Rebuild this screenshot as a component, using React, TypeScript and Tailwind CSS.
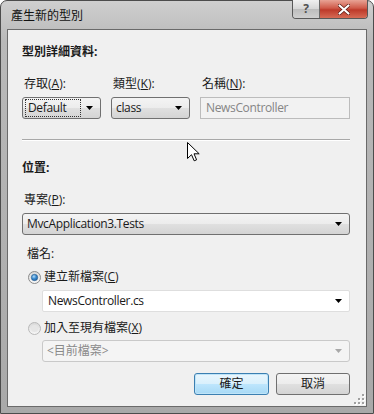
import React from "react";

const font = "font-['Open_Sans','Noto_Sans_CJK_TC',sans-serif]";
const latin = "leading-none tracking-[-0.35px]";

function Arrow({ gray }: { gray?: boolean }) {
  return (
    <svg width="7" height="4" viewBox="0 0 7 4" className="shrink-0">
      <path d="M0 0H7L3.5 4Z" fill={gray ? "#a8a8a8" : "#000"} />
    </svg>
  );
}

function Radio({ checked }: { checked?: boolean }) {
  return (
    <svg width="13" height="13" viewBox="0 0 13 13" className="shrink-0">
      <defs>
        <radialGradient id="dot" cx="40%" cy="35%" r="70%">
          <stop offset="0" stopColor="#b6dcf6" />
          <stop offset="0.5" stopColor="#3a8bd0" />
          <stop offset="1" stopColor="#1c5ea0" />
        </radialGradient>
        <linearGradient id="ring" x1="0" y1="0" x2="0" y2="1">
          <stop offset="0" stopColor="#d8d8d8" />
          <stop offset="1" stopColor="#f8f8f8" />
        </linearGradient>
      </defs>
      <circle cx="6.5" cy="6.5" r="6" fill="url(#ring)" stroke={checked ? "#8a8a8a" : "#b8b8b8"} />
      {checked ? (
        <circle cx="6.5" cy="6.5" r="3.2" fill="url(#dot)" stroke="#2a5d8c" strokeWidth="0.6" />
      ) : (
        <circle cx="6.5" cy="6.5" r="3.5" fill="#e6e6e6" />
      )}
    </svg>
  );
}

function Label({ text, k }: { text: string; k: string }) {
  return (
    <div className="h-[16px] pl-[2px] text-[12px] leading-[16px] text-[#1a1a1a]">
      {text}(<u>{k}</u>):
    </div>
  );
}

const comboBg =
  "rounded-[3px] border border-[#707070] bg-[linear-gradient(#f4f4f4,#ececec_50%,#e0e0e0_50%,#d4d4d4)]";

export default function App() {
  return (
    <div className={`h-[414px] w-[374px] overflow-hidden bg-white ${font}`}>
      <div className="flex h-[414px] w-[374px] flex-col rounded-t-[7px] border border-[#4c4c4c] bg-[linear-gradient(#cfcfcf,#b9b9b9_40px,#a9a9a9)]">
        {/* title bar */}
        <div className="flex h-[28px] shrink-0 items-start justify-between">
          <div className="self-center pl-[10px] pt-[2px] text-[12px] leading-[16px] text-[#111]">產生新的型別</div>
          <div className="-mt-px mr-[5px] flex h-[19px] overflow-hidden rounded-b-[4px] border border-t-0 border-[#585858]">
            <div className="flex w-[27px] items-center justify-center border-r border-[#6a6a6a] bg-[linear-gradient(#f0f0f0,#d6d6d6_50%,#bcbcbc_50%,#cfcfcf)] text-[12px] font-bold leading-none text-[#505050]">
              ?
            </div>
            <div className="flex w-[47px] items-center justify-center bg-[linear-gradient(#e8a395,#cf5a49_45%,#bd3a2a_55%,#d66b55)]">
              <svg width="12" height="11" viewBox="0 0 12 11">
                <path d="M1.5 1.5L10.5 9.5M10.5 1.5L1.5 9.5" stroke="#5a1a12" strokeWidth="3.6" strokeLinecap="round" />
                <path d="M1.5 1.5L10.5 9.5M10.5 1.5L1.5 9.5" stroke="#fff" strokeWidth="2.2" strokeLinecap="round" />
              </svg>
            </div>
          </div>
        </div>

        {/* client area */}
        <div className="relative mx-[6px] mb-[6px] flex flex-1 flex-col border border-[#6a6a6a] bg-[#f0f0f0] pl-[14px] pr-[16px] text-[12px] text-[#1a1a1a]">
          <div className="mt-[14px] h-[16px] font-bold leading-[16px]">型別詳細資料:</div>

          <div className="mt-[16px] grid grid-cols-[79px_79px_150px] gap-x-[10px]">
            <Label text="存取" k="A" />
            <Label text="類型" k="K" />
            <Label text="名稱" k="N" />
            <div className={`mt-[5px] flex h-[22px] items-center justify-between pl-[2px] pr-[7px] ${comboBg}`}>
              <div className={`flex h-[18px] w-[56px] items-center border border-dotted border-[#333] pl-[2px] ${latin}`}>
                Default
              </div>
              <Arrow />
            </div>
            <div className={`mt-[5px] flex h-[22px] items-center justify-between pl-[4px] pr-[7px] ${comboBg}`}>
              <span className={latin}>class</span>
              <Arrow />
            </div>
            <div className={`mt-[5px] flex h-[22px] items-center border border-[#bcbcbc] bg-[#f2f2f2] pl-[5px] text-[#858585] ${latin}`}>
              NewsController
            </div>
          </div>

          <div className="mt-[20px] h-[2px] border-t border-b border-t-[#a8a8a8] border-b-white" />

          <div className="mt-[19px] h-[16px] font-bold leading-[16px]">位置:</div>
          <div className="mt-[16px]">
            <Label text="專案" k="P" />
          </div>
          <div className={`mt-[5px] flex h-[22px] items-center justify-between pl-[4px] pr-[7px] ${comboBg}`}>
            <span className={latin}>MvcApplication3.Tests</span>
            <Arrow />
          </div>

          <div className="mt-[11px] h-[16px] pl-[5px] leading-[16px]">檔名:</div>
          <div className="mt-[7px] flex h-[16px] items-center gap-[3px] pl-[6px] leading-[16px]">
            <Radio checked />
            <span>
              建立新檔案(<u>C</u>)
            </span>
          </div>
          <div className="ml-[20px] mt-[5px] flex h-[22px] items-center justify-between rounded-[2px] border border-[#dedede] bg-white pl-[5px] pr-[7px]">
            <span className={latin}>NewsController.cs</span>
            <Arrow />
          </div>
          <div className="mt-[8px] flex h-[16px] items-center gap-[3px] pl-[6px] leading-[16px] text-[#1a1a1a]">
            <Radio />
            <span>
              加入至現有檔案(<u>X</u>)
            </span>
          </div>
          <div className="ml-[20px] mt-[4px] flex h-[22px] items-center justify-between rounded-[3px] border border-[#c9c9c9] bg-[#f4f4f4] pl-[4px] pr-[7px] text-[#8a8a8a]">
            <span className="leading-none">&lt;目前檔案&gt;</span>
            <Arrow gray />
          </div>

          <div className="mt-[11px] flex justify-end gap-[7px]">
            <div className="flex h-[22px] w-[75px] items-center justify-center rounded-[3px] border border-[#3c7fb1] bg-[linear-gradient(#eaf6fd,#d9f0fc_50%,#bee6fd_50%,#a7d9f5)] shadow-[inset_0_0_0_1px_#bfe4f8]">
              確定
            </div>
            <div className={`flex h-[22px] w-[74px] items-center justify-center ${comboBg}`}>取消</div>
          </div>

          {/* resize grip */}
          <svg width="12" height="12" viewBox="0 0 12 12" className="absolute bottom-[1px] right-[1px]">
            {[
              [9, 1],
              [9, 5],
              [5, 5],
              [9, 9],
              [5, 9],
              [1, 9],
            ].map(([x, y], i) => (
              <g key={i}>
                <rect x={x + 1} y={y + 1} width="2" height="2" fill="#fff" />
                <rect x={x} y={y} width="2" height="2" fill="#a0a0a0" />
              </g>
            ))}
          </svg>

          {/* mouse pointer */}
          <svg width="13" height="20" viewBox="0 0 13 20" className="absolute left-[179px] top-[112px]">
            <path d="M0.5 0.5V16.5L4.5 12.7L7.2 18.8L9.6 17.8L7 11.8H12.2Z" fill="#fff" stroke="#000" strokeWidth="1" strokeLinejoin="round" />
          </svg>
        </div>
      </div>
    </div>
  );
}
